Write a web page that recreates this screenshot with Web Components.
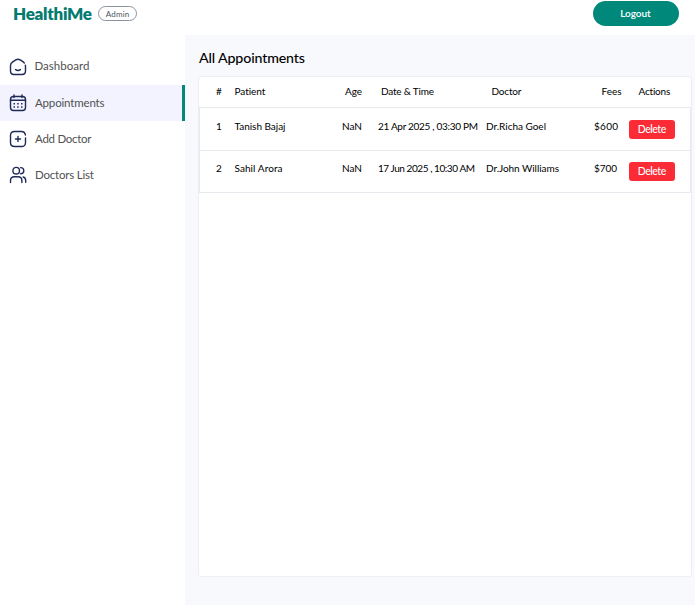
<!DOCTYPE html>
<html lang="en">
<head>
<meta charset="utf-8">
<title>HealthiMe Admin</title>
<style>
html,body{margin:0;height:100%}
body{font-family:Lato,"Liberation Sans",sans-serif;background:#fff;overflow:hidden;color:#000}
</style>
</head>
<body>
<admin-app></admin-app>
<script>
const define=(name,html,init)=>{
  const t=document.createElement('template');
  t.innerHTML=html;
  customElements.define(name,class extends HTMLElement{
    constructor(){super();this.attachShadow({mode:'open'}).append(t.content.cloneNode(true));}
    connectedCallback(){if(init)init(this,this.shadowRoot);}
  });
};

/* Text tracked so that it fills the width given in "w". */
define('fit-text','<style>:host{display:inline-block;white-space:nowrap;text-align:left}span{display:inline-block;white-space:pre}</style><span></span>',(el,root)=>{
  const s=root.querySelector('span'),w=+el.getAttribute('w');
  s.textContent=el.getAttribute('text');
  el.style.width=w+'px';
  s.style.letterSpacing=((w-s.getBoundingClientRect().width)/(s.textContent.length-1))+'px';
});

define('app-header',`<style>
:host{display:flex;align-items:center;height:34.5px;box-sizing:border-box;padding:0 16.5px 7px 13px;background:#fff}
.brand{font-size:17px;line-height:20px;font-weight:800;color:#047a70}
.badge{display:flex;align-items:center;justify-content:center;box-sizing:border-box;width:39px;height:15px;margin-left:6px;border:1px solid #8b93a1;border-radius:8px;font-size:8px;color:#4b5563}
button{margin-left:auto;width:86px;height:25px;border:0;border-radius:13px;background:#00897b;color:#fff;font:600 10px Lato,sans-serif;padding:0 0 1px}
</style><fit-text class="brand" w="79" text="HealthiMe"></fit-text><span class="badge"><fit-text w="23.5" text="Admin"></fit-text></span><button><fit-text w="30.5" text="Logout"></fit-text></button>`);

const icons={
 home:'<path d="M16.3 7.1Q16.5 8 16.5 9V13Q16.5 16.5 13 16.5H5Q1.5 16.5 1.5 13V7.7Q1.5 5.5 3.4 4.2L6.8 1.9Q9 .5 11.2 1.9L14.6 4.2L15.3 4.9"/><path d="M6.6 11.6Q9 13.3 11.4 11.6"/>',
 calendar:'<rect x="1.5" y="2.5" width="15" height="14" rx="3"/><path d="M1.5 6.3H16.5M5 .9V3.6M13 .9V3.6"/><path stroke-width="1.5" stroke-linecap="butt" d="M4.5 9.7H6M8.2 9.7H9.7M12 9.7H13.5M4.5 13H6M8.2 13H9.7M12 13H13.5"/>',
 add:'<path d="M16.5 8V13Q16.2 16.5 12.5 16.5H5.5Q1.5 16.5 1.5 12.5V5.5Q1.5 1.5 5.5 1.5H12.5Q15.8 1.5 16.4 5"/><path d="M9 6.5V11.5M6.5 9H11.5"/>',
 people:'<circle cx="7.2" cy="4.7" r="3.3"/><path d="M1.5 16.5V14.7Q1.5 10.8 5.4 10.8H9Q12.9 10.8 12.9 14.7V16.5M11.6 1.6Q14.8 1.6 14.8 4.7Q14.8 7.8 11.6 7.8M14.2 11Q16.7 11.7 16.7 14.5V16.3"/>'
};
define('nav-item',`<style>
:host{display:flex;align-items:center;height:36px;box-sizing:border-box;padding-left:9px;border-right:3px solid transparent;font-size:11.5px;line-height:16px;color:#515151}
:host([active]){background:#f2f3ff;border-color:#00897b}
svg{width:18px;height:18px;fill:none;stroke:#1f2a55;stroke-width:1.4;stroke-linecap:round;stroke-linejoin:round;margin-right:var(--gap,8px);flex:none}
</style><svg viewBox="0 0 18 18"></svg><slot></slot>`,(el,root)=>{root.querySelector('svg').innerHTML=icons[el.getAttribute('icon')];});

define('side-nav',`<style>
:host{display:flex;flex-direction:column;width:185px;box-sizing:border-box;padding-top:14px;background:#fff;flex:none}
nav-item[icon=home]{--gap:7.5px}
nav-item[icon=home] fit-text{margin-bottom:1px}
</style>
<nav-item icon="home"><fit-text w="55" text="Dashboard"></fit-text></nav-item>
<nav-item icon="calendar" active><fit-text w="69.5" text="Appointments"></fit-text></nav-item>
<nav-item icon="add"><fit-text w="56.5" text="Add Doctor"></fit-text></nav-item>
<nav-item icon="people"><fit-text w="59" text="Doctors List"></fit-text></nav-item>`);

define('table-head',`<style>
:host{display:grid;grid-template-columns:18.5px 110.5px 36px 110.5px 110px 37px 1fr;align-items:center;height:30px;padding:0 0 2px 17px;box-sizing:border-box}
</style>
<fit-text w="6" text="#"></fit-text><fit-text w="31" text="Patient"></fit-text><fit-text w="17" text="Age"></fit-text><fit-text w="53" text="Date &amp; Time"></fit-text><fit-text w="30" text="Doctor"></fit-text><fit-text w="20" text="Fees"></fit-text><fit-text w="32" text="Actions"></fit-text>`);

define('appointment-row',`<style>
:host{display:grid;grid-template-columns:18.5px 107.5px 36px 108px 108px 35.3px 1fr;align-items:start;height:43px;box-sizing:border-box;padding:11px 0 0 16px;border:1px solid #e9eaf0;border-bottom:0}
:host([last]){border-bottom:1px solid #e9eaf0;padding-top:10px}
.t{line-height:14px}
button{width:45.4px;height:19px;margin-top:.6px;border:0;border-radius:3px;background:#fb2c36;color:#fff;font:500 10.5px Lato,sans-serif;padding:0 0 1px}
</style>`,(el,root)=>{
  const vals=el.getAttribute('values').split('|'),ws=el.getAttribute('widths').split('|');
  vals.forEach((v,i)=>{
    const f=document.createElement('fit-text');
    f.className='t';f.setAttribute('text',v);f.setAttribute('w',ws[i]);root.append(f);
  });
  const b=document.createElement('button');
  b.innerHTML='<fit-text w="28.5" text="Delete"></fit-text>';
  root.append(b);
});

define('appointments-table',`<style>
:host{display:block;box-sizing:border-box;width:494px;height:501px;border:1px solid #eceef3;border-radius:3px;background:#fff;font-size:10px}
</style><table-head></table-head>
<appointment-row values="1|Tanish Bajaj|NaN|21 Apr 2025 , 03:30 PM|Dr.Richa Goel|$600" widths="4|51|20|100|60|24"></appointment-row>
<appointment-row last values="2|Sahil Arora|NaN|17 Jun 2025 , 10:30 AM|Dr.John Williams|$700" widths="6|48|20|97|73|23"></appointment-row>`);

define('admin-app',`<style>
:host{display:flex;flex-direction:column;height:100vh}
.body{display:flex;flex:1;min-height:0}
main{flex:1;min-width:0;background:#f8f9fd;padding:14.5px 0 0 13px}
h1{margin:0 0 9px 1px;font-size:14.2px;line-height:18px;font-weight:500}
</style><app-header></app-header><div class="body"><side-nav></side-nav><main><h1><fit-text w="106" text="All Appointments"></fit-text></h1><appointments-table></appointments-table></main></div>`);
</script>
</body>
</html>
